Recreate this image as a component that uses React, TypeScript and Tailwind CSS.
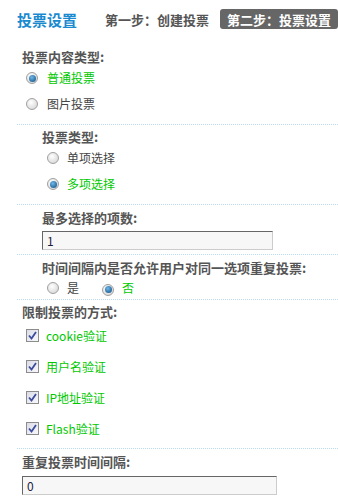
import React from "react";

const LABEL = "text-[13px] font-bold text-[#555] leading-none";

function Radio({ checked }: { checked?: boolean }) {
  return (
    <span className="relative inline-flex h-[12px] w-[12px] shrink-0 items-center justify-center rounded-full border border-[#a0a0a0] bg-[radial-gradient(circle_at_40%_35%,#ffffff,#cfcfcf)]">
      {checked && (
        <span className="h-[7px] w-[7px] rounded-full bg-[radial-gradient(circle_at_40%_35%,#6fb6e6,#0b4c82)]" />
      )}
    </span>
  );
}

function Checkbox() {
  return (
    <span className="inline-flex h-[13px] w-[13px] shrink-0 items-center justify-center border border-[#8c8c8c] bg-[linear-gradient(135deg,#dcdce8,#f8f8fb)]">
      <svg width="9" height="9" viewBox="0 0 9 9">
        <path d="M1 4.5 L3.5 7.5 L8 1" fill="none" stroke="#3b4c9c" strokeWidth="1.8" />
      </svg>
    </span>
  );
}

function TextBox({ value, width }: { value: string; width: string }) {
  return (
    <div
      className={`${width} flex h-[19px] items-center border border-t-[#666] border-l-[#666] border-b-[#ccc] border-r-[#ccc] bg-[#f7f7f7] pl-[4px] text-[12px] text-[#1c1c3c]`}
    >
      {value}
    </div>
  );
}

export default function App() {
  return (
    <div className="h-[497px] w-[338px] overflow-hidden bg-white font-['Noto_Sans_CJK_SC',sans-serif] text-[12px]">
      {/* header */}
      <div className="flex h-[38px] items-center pl-[17px]">
        <span className="text-[15px] font-bold leading-none text-[#1a8ad0]">投票设置</span>
        <span className="ml-[28px] text-[13px] font-bold leading-none text-[#555]">第一步：创建投票</span>
        <span className="ml-[11px] flex h-[20px] items-center rounded-[3px] bg-[#666] px-[7px] text-[13px] font-bold leading-none text-white">
          第二步：投票设置
        </span>
      </div>

      {/* content type */}
      <div className="ml-[17px] border-b border-dotted border-[#b9dcf3] pb-[7px] pl-[5px] pt-[9px]">
        <div className={`flex h-[18px] items-center ${LABEL}`}>投票内容类型:</div>
        <div className="flex h-[26px] items-center gap-[9px] pl-[4px]">
          <Radio checked />
          <span className="text-[#00c800]">普通投票</span>
        </div>
        <div className="flex h-[26px] items-center gap-[9px] pl-[4px]">
          <Radio />
          <span className="text-[#444]">图片投票</span>
        </div>
      </div>

      {/* vote type */}
      <div className="ml-[17px] border-b border-dotted border-[#b9dcf3] pb-[7px] pl-[25px] pt-[3px]">
        <div className={`flex h-[17px] items-center ${LABEL}`}>投票类型:</div>
        <div className="flex h-[26px] items-center gap-[8px] pl-[5px]">
          <Radio />
          <span className="text-[#444]">单项选择</span>
        </div>
        <div className="flex h-[26px] items-center gap-[8px] pl-[5px]">
          <Radio checked />
          <span className="text-[#00c800]">多项选择</span>
        </div>
      </div>

      {/* max items */}
      <div className="ml-[17px] border-b border-dotted border-[#b9dcf3] pb-[4px] pl-[25px] pt-[3px]">
        <div className={`flex h-[18px] items-center ${LABEL}`}>最多选择的项数:</div>
        <div className="mt-[5px]">
          <TextBox value="1" width="w-[231px]" />
        </div>
      </div>

      {/* repeat voting */}
      <div className="ml-[17px] border-b border-dotted border-[#b9dcf3] pl-[25px] pt-[3px]">
        <div className={`flex h-[19px] items-center ${LABEL}`}>时间间隔内是否允许用户对同一选项重复投票:</div>
        <div className="flex h-[22px] items-center pl-[5px]">
          <Radio />
          <span className="ml-[8px] text-[#444]">是</span>
          <span className="ml-[23px]">
            <Radio checked />
          </span>
          <span className="ml-[8px] text-[#00c800]">否</span>
        </div>
      </div>

      {/* limit methods */}
      <div className="ml-[17px] border-b border-dotted border-[#b9dcf3] pb-[4px] pl-[5px] pt-[3px]">
        <div className={`flex h-[17px] items-center ${LABEL}`}>限制投票的方式:</div>
        {["cookie验证", "用户名验证", "IP地址验证", "Flash验证"].map((t) => (
          <div key={t} className="flex h-[31px] items-center gap-[7px] pl-[4px]">
            <Checkbox />
            <span className="text-[#00c800]">{t}</span>
          </div>
        ))}
      </div>

      {/* interval */}
      <div className="ml-[17px] pl-[5px] pt-[3px]">
        <div className={`flex h-[18px] items-center ${LABEL}`}>重复投票时间间隔:</div>
        <div className="mt-[6px]">
          <TextBox value="0" width="w-[255px]" />
        </div>
      </div>
    </div>
  );
}
